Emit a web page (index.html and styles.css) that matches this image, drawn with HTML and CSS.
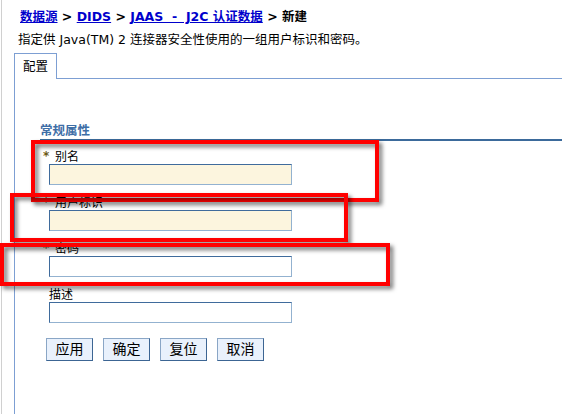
FILE: index.html
```html
<!DOCTYPE html>
<html lang="zh">
<head>
<meta charset="utf-8">
<title>新建</title>
<link rel="stylesheet" href="styles.css">
</head>
<body>
<div class="frame">
  <div class="crumbs">
    <a href="#">数据源</a> &gt; <a href="#">DIDS</a> &gt; <a href="#">JAAS&nbsp; -&nbsp; J2C 认证数据</a> &gt; 新建
  </div>
  <div class="desc">指定供 Java(TM) 2 连接器安全性使用的一组用户标识和密码。</div>
  <div class="tabs">
    <div class="tab">配置</div>
    <div class="tab-fill"></div>
  </div>
  <div class="panel">
    <div class="section-title">常规属性</div>
    <div class="fields">
      <div class="field">
        <label class="label"><span class="req">*</span>别名</label>
        <input class="input input-req" type="text">
      </div>
      <div class="field">
        <label class="label"><span class="req">*</span>用户标识</label>
        <input class="input input-req" type="text">
      </div>
      <div class="field">
        <label class="label"><span class="req">*</span>密码</label>
        <input class="input" type="password">
      </div>
      <div class="field">
        <label class="label">描述</label>
        <input class="input" type="text">
      </div>
    </div>
    <div class="buttons">
      <button class="btn" type="button">应用</button>
      <button class="btn" type="button">确定</button>
      <button class="btn" type="button">复位</button>
      <button class="btn" type="button">取消</button>
    </div>
  </div>
</div>
<div class="mark mark-1"></div>
<div class="mark mark-2"></div>
<div class="mark mark-3"></div>
</body>
</html>
```
FILE: styles.css
```css
html, body {
  margin: 0;
  padding: 0;
  background: #ffffff;
}
body {
  font-family: "DejaVu Sans", "Noto Sans CJK SC", sans-serif;
  font-size: 12px;
  color: #000;
  width: 562px;
  height: 414px;
  overflow: hidden;
  position: relative;
}
.frame {
  margin-left: 1px;
  border-left: 1px solid #d0d0d0;
  height: 414px;
  box-sizing: border-box;
  display: flex;
  flex-direction: column;
}
.crumbs {
  padding: 9px 0 0 18px;
  font-size: 12.5px;
  font-weight: bold;
  line-height: 16px;
  white-space: nowrap;
}
.crumbs a {
  color: #0000cc;
  text-decoration: underline;
}
.desc {
  margin-top: 7px;
  padding-left: 16px;
  font-size: 12.5px;
  line-height: 16px;
  white-space: nowrap;
}
.tabs {
  display: flex;
  margin-top: 5px;
  margin-left: 12px;
  height: 26px;
  flex: none;
}
.tab {
  border: 1px solid #7d9fd3;
  border-bottom: none;
  width: 41px;
  text-align: center;
  font-size: 12.5px;
  line-height: 25px;
}
.tab-fill {
  flex: 1;
  border-bottom: 1px solid #7d9fd3;
}
.panel {
  flex: 1;
  min-height: 0;
  margin-left: 12px;
  border-left: 1px solid #7d9fd3;
}
.section-title {
  margin: 44px 0 0 25px;
  font-size: 12.5px;
  font-weight: bold;
  line-height: 16px;
  color: #3e6ea6;
  border-bottom: 2px solid #3b6a9b;
}
.fields {
  padding: 9px 0 0 34px;
}
.field {
  margin-bottom: 11px;
}
.label {
  display: block;
  line-height: 14px;
  height: 14px;
  white-space: nowrap;
}
.req {
  display: inline-block;
  width: 12px;
  margin-left: -6px;
  color: #6b5a14;
  font-weight: bold;
  font-size: 12px;
  vertical-align: top;
  line-height: 13px;
}
.input {
  display: block;
  box-sizing: border-box;
  width: 243px;
  height: 21px;
  margin: 0;
  padding: 0 3px;
  background: #ffffff;
  border-style: solid;
  border-width: 1px;
  border-color: #3f6b9c #93b2d0 #93b2d0 #3f6b9c;
  font: inherit;
  outline: none;
}
.input-req {
  background: #fcf5de;
}
.buttons {
  display: flex;
  gap: 10px;
  margin-top: 15px;
  padding-left: 31px;
}
.btn {
  box-sizing: border-box;
  width: 47px;
  height: 23px;
  margin: 0;
  padding: 0;
  background: #e9f1fc;
  border-style: solid;
  border-width: 1px;
  border-color: #8aa6c6 #3c6593 #3c6593 #8aa6c6;
  font-family: "DejaVu Sans", "Noto Sans CJK SC", sans-serif;
  font-size: 14px;
  line-height: 21px;
  color: #000;
}
.mark {
  position: absolute;
  box-sizing: border-box;
  border: 4px solid #ff0000;
  filter: drop-shadow(3px 3px 2px rgba(0, 0, 0, 0.55));
}
.mark-1 {
  left: 31px;
  top: 140px;
  width: 348px;
  height: 62px;
}
.mark-2 {
  left: 10px;
  top: 193px;
  width: 338px;
  height: 49px;
}
.mark-3 {
  left: 0;
  top: 243px;
  width: 390px;
  height: 43px;
}
```
